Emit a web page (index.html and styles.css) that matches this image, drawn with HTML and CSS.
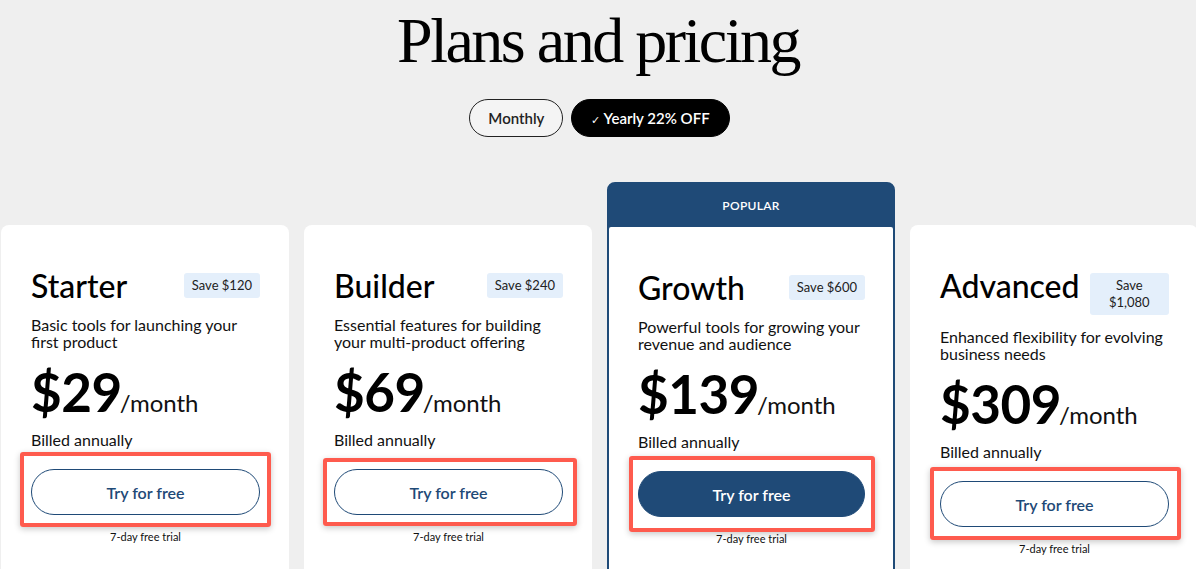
FILE: index.html
```html
<!DOCTYPE html>
<html lang="en">
<head>
    <meta charset="UTF-8">
    <meta name="viewport" content="width=device-width, initial-scale=1.0">
    <title>Plans and pricing</title>
    <link rel="stylesheet" href="styles.css">
</head>
<body>
    <header class="page-head">
        <h1>Plans and pricing</h1>
        <div class="billing-toggle">
            <button class="pill">Monthly</button>
            <button class="pill active"><span class="check">&#10003;</span> Yearly 22% OFF</button>
        </div>
    </header>

    <main class="plans">
        <div class="card">
            <div class="card-body">
                <div class="card-head">
                    <h2>Starter</h2>
                    <span class="save">Save $120</span>
                </div>
                <p class="desc">Basic tools for launching your first product</p>
                <div class="price"><span class="amount">$29</span><span class="per">/month</span></div>
                <p class="billed">Billed annually</p>
                <div class="cta mark-starter"><button class="try">Try for free</button></div>
                <p class="trial">7-day free trial</p>
            </div>
        </div>

        <div class="card">
            <div class="card-body">
                <div class="card-head">
                    <h2>Builder</h2>
                    <span class="save">Save $240</span>
                </div>
                <p class="desc">Essential features for building your multi-product offering</p>
                <div class="price"><span class="amount">$69</span><span class="per">/month</span></div>
                <p class="billed">Billed annually</p>
                <div class="cta mark-builder"><button class="try">Try for free</button></div>
                <p class="trial">7-day free trial</p>
            </div>
        </div>

        <div class="card popular">
            <div class="badge-band">POPULAR</div>
            <div class="card-body">
                <div class="card-head">
                    <h2>Growth</h2>
                    <span class="save">Save $600</span>
                </div>
                <p class="desc">Powerful tools for growing your revenue and audience</p>
                <div class="price"><span class="amount">$139</span><span class="per">/month</span></div>
                <p class="billed">Billed annually</p>
                <div class="cta mark-growth"><button class="try filled">Try for free</button></div>
                <p class="trial">7-day free trial</p>
            </div>
        </div>

        <div class="card">
            <div class="card-body">
                <div class="card-head">
                    <h2>Advanced</h2>
                    <span class="save">Save $1,080</span>
                </div>
                <p class="desc">Enhanced flexibility for evolving business needs</p>
                <div class="price"><span class="amount">$309</span><span class="per">/month</span></div>
                <p class="billed">Billed annually</p>
                <div class="cta mark-advanced"><button class="try">Try for free</button></div>
                <p class="trial">7-day free trial</p>
            </div>
        </div>
    </main>
</body>
</html>
```

FILE: styles.css
```css
body {
    margin: 0;
    font-family: Lato, "Noto Sans", Arial, sans-serif;
    background-color: #efefef;
    color: #111;
    overflow: hidden;
    height: 100vh;
}

.page-head {
    text-align: center;
}

.page-head h1 {
    margin: 9px 0 0;
    font-family: "Liberation Serif", "Times New Roman", serif;
    font-weight: 400;
    font-size: 64px;
    line-height: 64px;
    letter-spacing: -2.5px;
    color: #000;
}

.billing-toggle {
    display: flex;
    justify-content: center;
    gap: 8px;
    margin-top: 26px;
    padding-left: 3px;
}

.pill {
    height: 38px;
    padding: 0 18px;
    border: 1px solid #222;
    border-radius: 19px;
    background-color: #f4f4f4;
    font-family: inherit;
    font-size: 15px;
    font-weight: 600;
    color: #222;
    cursor: pointer;
}

.pill.active {
    background-color: #000;
    border-color: #000;
    color: #fff;
    padding: 0 19px;
}

.pill .check {
    font-size: 11px;
    font-weight: 400;
}

/* plan cards */

.plans {
    display: flex;
    align-items: flex-start;
    gap: 15px;
    margin: 88px 0 0 1px;
}

.card {
    flex: 0 0 288px;
    height: 420px;
    background-color: #fff;
    border-radius: 8px;
    box-sizing: border-box;
}

.card.popular {
    margin-top: -43px;
    height: 463px;
    border: 2px solid #1f4a77;
    background-color: #1f4a77;
}

.badge-band {
    height: 43px;
    line-height: 43px;
    text-align: center;
    color: #fff;
    font-size: 12px;
    font-weight: 600;
    letter-spacing: 0.3px;
}

.card-body {
    padding: 44px 29px 0 30px;
}

.popular .card-body {
    background-color: #fff;
    height: 100%;
    padding: 44px 28px 0 29px;
    border-radius: 2px 2px 0 0;
}

.card-head {
    display: flex;
    justify-content: space-between;
    align-items: flex-start;
    gap: 10px;
}

.card-head h2 {
    margin: 0;
    flex-shrink: 0;
    font-size: 32px;
    line-height: 34px;
    font-weight: 500;
    color: #000;
}

.save {
    background-color: #e4effb;
    border-radius: 3px;
    padding: 4px 8px;
    font-size: 13px;
    line-height: 17px;
    text-align: center;
    color: #222;
    margin-top: 4px;
}

.desc {
    margin: 13px 0 0;
    font-size: 16px;
    line-height: 17px;
}

.price {
    margin-top: 14px;
    display: flex;
    align-items: baseline;
}

.price .amount {
    font-size: 53px;
    line-height: 56px;
    font-weight: 700;
    color: #000;
    letter-spacing: -0.5px;
}

.price .per {
    font-size: 24px;
    margin-left: -2px;
}

.billed {
    margin: 11px 0 0;
    font-size: 16px;
    line-height: 18px;
}

.cta {
    position: relative;
    margin-top: 20px;
}

.try {
    display: block;
    width: 100%;
    height: 46px;
    border: 1px solid #1f4a77;
    border-radius: 23px;
    background-color: #fff;
    color: #1f4a77;
    font-family: inherit;
    font-size: 16px;
    font-weight: 600;
    cursor: pointer;
}

.try.filled {
    background-color: #1f4a77;
    color: #fff;
}

/* red highlight boxes drawn over the buttons */
.cta::after {
    content: "";
    position: absolute;
    border: 4px solid #fe5b4e;
    border-radius: 3px;
    box-shadow: 0 2px 6px rgba(0, 0, 0, 0.22);
    pointer-events: none;
}

.mark-starter::after { top: -17px; bottom: -12px; left: -11px; right: -11px; }
.mark-builder::after { top: -11px; bottom: -11px; left: -11px; right: -14px; }
.mark-growth::after { top: -15px; bottom: -15px; left: -9px; right: -10px; }
.mark-advanced::after { top: -14px; bottom: -13px; left: -10px; right: -12px; }

.trial {
    margin: 15px 0 0;
    text-align: center;
    font-size: 11px;
    line-height: 13px;
}
```
